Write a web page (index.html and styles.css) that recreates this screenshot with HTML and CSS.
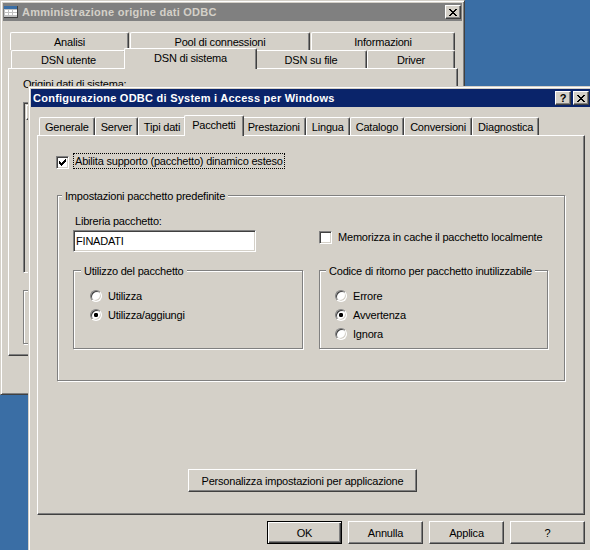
FILE: index.html
```html
<!DOCTYPE html>
<html lang="it">
<head>
<meta charset="utf-8">
<title>Configurazione ODBC di System i Access per Windows</title>
<link rel="stylesheet" href="styles.css">
</head>
<body>
<div class="win back">
  <div class="titlebar inactive">
    <svg class="appicon" width="16" height="16" viewBox="0 0 16 16" shape-rendering="crispEdges">
      <rect x="1" y="2" width="14" height="12" fill="#c0c0c0"/>
      <rect x="1" y="2" width="14" height="3" fill="#3a6ea5"/>
      <rect x="2" y="6" width="3" height="2" fill="#fff"/>
      <rect x="6" y="6" width="3" height="2" fill="#fff"/>
      <rect x="10" y="6" width="4" height="2" fill="#fff"/>
      <rect x="2" y="9" width="3" height="2" fill="#fff"/>
      <rect x="6" y="9" width="3" height="2" fill="#fff"/>
      <rect x="10" y="9" width="4" height="2" fill="#fff"/>
      <rect x="1" y="13" width="14" height="1" fill="#404040"/>
      <rect x="14" y="2" width="1" height="12" fill="#404040"/>
    </svg>
    <span class="title">Amministrazione origine dati ODBC</span>
    <span class="tbbtn">
      <svg width="8" height="7" viewBox="0 0 8 7" shape-rendering="crispEdges"><path fill="#000" d="M0 0h2v1h-2zM6 0h2v1h-2zM1 1h2v1h-2zM5 1h2v1h-2zM2 2h4v1h-4zM3 3h2v1h-2zM2 4h4v1h-4zM1 5h2v1h-2zM5 5h2v1h-2zM0 6h2v1h-2zM6 6h2v1h-2z"/></svg>
    </span>
  </div>
  <div class="client back-client">
    <div class="tabrows">
      <div class="tabrow row1">
        <div class="tab t-analisi">Analisi</div>
        <div class="tab t-pool">Pool di connessioni</div>
        <div class="tab t-info">Informazioni</div>
      </div>
      <div class="tabrow row2">
        <div class="tab t-utente">DSN utente</div>
        <div class="tab sel t-sistema">DSN di sistema</div>
        <div class="tab t-file">DSN su file</div>
        <div class="tab t-driver">Driver</div>
      </div>
    </div>
    <div class="panel back-panel">
      <div class="back-label">Origini dati di sistema:</div>
      <div class="listbox">
        <div class="lb-head"><span class="hdr"></span><span class="hdr"></span></div>
      </div>
      <div class="group back-group"></div>
    </div>
  </div>
</div>

<div class="win front">
  <div class="titlebar active">
    <span class="title">Configurazione ODBC di System i Access per Windows</span>
    <span class="tbbtn help">?</span>
    <span class="tbbtn">
      <svg width="8" height="7" viewBox="0 0 8 7" shape-rendering="crispEdges"><path fill="#000" d="M0 0h2v1h-2zM6 0h2v1h-2zM1 1h2v1h-2zM5 1h2v1h-2zM2 2h4v1h-4zM3 3h2v1h-2zM2 4h4v1h-4zM1 5h2v1h-2zM5 5h2v1h-2zM0 6h2v1h-2zM6 6h2v1h-2z"/></svg>
    </span>
  </div>
  <div class="client front-client">
    <div class="tabstrip">
      <div class="tab">Generale</div>
      <div class="tab">Server</div>
      <div class="tab">Tipi dati</div>
      <div class="tab sel">Pacchetti</div>
      <div class="tab">Prestazioni</div>
      <div class="tab">Lingua</div>
      <div class="tab">Catalogo</div>
      <div class="tab">Conversioni</div>
      <div class="tab">Diagnostica</div>
    </div>
    <div class="panel front-panel">
      <div class="chk-row first">
        <span class="cb">
          <svg width="7" height="7" viewBox="0 0 7 7" shape-rendering="crispEdges"><path fill="#000" d="M6 0h1v1h-1zM5 1h2v1h-2zM0 2h1v1h-1zM4 2h3v1h-3zM0 3h2v1h-2zM3 3h3v1h-3zM0 4h5v1h-5zM1 5h3v1h-3zM2 6h1v1h-1z"/></svg>
        </span>
        <span class="focus">Abilita supporto (pacchetto) dinamico esteso</span>
      </div>
      <div class="group g1">
        <div class="caption">Impostazioni pacchetto predefinite</div>
        <div class="g1-grid">
          <div class="lbl">Libreria pacchetto:</div>
          <div class="edit">FINADATI</div>
          <div class="chk-row cache"><span class="cb"></span><span class="chk-text">Memorizza in cache il pacchetto localmente</span></div>
          <div class="group g-use">
            <div class="caption">Utilizzo del pacchetto</div>
            <div class="radios">
              <div class="radio-row"><span class="radio"></span><span>Utilizza</span></div>
              <div class="radio-row"><span class="radio on"></span><span>Utilizza/aggiungi</span></div>
            </div>
          </div>
          <div class="group g-ret">
            <div class="caption">Codice di ritorno per pacchetto inutilizzabile</div>
            <div class="radios">
              <div class="radio-row"><span class="radio"></span><span>Errore</span></div>
              <div class="radio-row"><span class="radio on"></span><span>Avvertenza</span></div>
              <div class="radio-row"><span class="radio"></span><span>Ignora</span></div>
            </div>
          </div>
        </div>
      </div>
      <button class="btn wide">Personalizza impostazioni per applicazione</button>
    </div>
    <div class="dlg-buttons">
      <button class="btn default">OK</button>
      <button class="btn">Annulla</button>
      <button class="btn">Applica</button>
      <button class="btn">?</button>
    </div>
  </div>
</div>
</body>
</html>
```

FILE: styles.css
```css
* { box-sizing: border-box; }
html, body { margin: 0; padding: 0; }
body {
  width: 590px;
  height: 550px;
  overflow: hidden;
  position: relative;
  background: #3a6ea5;
  font-family: "Liberation Sans", Arial, sans-serif;
  font-size: 11px;
  letter-spacing: -0.2px;
  color: #000;
}

/* windows on the desktop */
.win {
  position: absolute;
  display: flex;
  flex-direction: column;
  background: #d4d0c8;
  border: 1px solid;
  border-color: #d4d0c8 #404040 #404040 #d4d0c8;
  box-shadow: inset 1px 1px #fff, inset -1px -1px #808080;
  padding: 2px;
}
.back { left: 0; top: 0; width: 465px; height: 395px; }
.front { left: 28px; top: 86px; width: 566px; height: 470px; }

/* title bars */
.titlebar {
  flex: none;
  height: 18px;
  display: flex;
  align-items: center;
  padding: 0 2px;
  font-weight: bold;
  letter-spacing: 0.25px;
  white-space: nowrap;
}
.titlebar.inactive { background: #808080; color: #d4d0c8; padding: 0 1px 0 0; }
.titlebar.active { background: #0a246a; color: #fff; }
.appicon { flex: none; margin-right: 3px; }
.title { flex: 1; }
.tbbtn {
  flex: none;
  width: 16px;
  height: 14px;
  display: flex;
  align-items: center;
  justify-content: center;
  background: #d4d0c8;
  border: 1px solid;
  border-color: #fff #404040 #404040 #fff;
  box-shadow: inset -1px -1px #808080;
}
.tbbtn + .tbbtn { margin-left: 2px; }
.help { color: #000; font-size: 11px; letter-spacing: 0; line-height: 12px; }

/* tabs */
.tab {
  flex: none;
  height: 18px;
  padding: 2px 5px 0;
  line-height: 15px;
  text-align: center;
  white-space: nowrap;
  background: #d4d0c8;
  border: 1px solid;
  border-bottom: 0;
  border-color: #fff #404040 #d4d0c8 #fff;
  border-radius: 2px 2px 0 0;
  box-shadow: inset -1px 0 #808080;
}
.tab.sel {
  height: 21px;
  margin: 0 -2px -1px;
  padding-left: 7px;
  padding-right: 7px;
  position: relative;
  z-index: 2;
}

/* tab panels */
.panel {
  border: 1px solid;
  border-color: #fff #404040 #404040 #fff;
  box-shadow: inset -1px -1px #808080;
}

/* back window */
.back-client { flex: 1; padding: 11px 4px 0 5px; }
.tabrows { display: flex; flex-direction: column; position: relative; z-index: 1; }
.tabrow { display: flex; align-items: flex-end; height: 18px; }
.row1 { padding-left: 2px; gap: 1px; }
.row2 { padding-left: 3px; }
.tabrow .tab { padding-left: 0; padding-right: 0; }
.t-analisi { width: 119px; }
.t-pool { width: 180px; }
.t-info { width: 144px; }
.t-utente { width: 115px; }
.t-sistema { width: 133px; }
.t-file { width: 112px; }
.t-driver { width: 88px; }
.back-panel { height: 288px; padding: 9px 0 0 14px; }
.back-label { line-height: 13px; white-space: nowrap; }
.listbox {
  margin-top: 11px;
  width: 420px;
  height: 171px;
  padding: 2px;
  border: 1px solid;
  border-color: #808080 #fff #fff #808080;
  box-shadow: inset 1px 1px #404040, inset -1px -1px #d4d0c8;
}
.lb-head { display: flex; height: 15px; }
.hdr {
  width: 100px;
  border: 1px solid;
  border-color: #fff #404040 #404040 #fff;
  box-shadow: inset -1px -1px #808080;
}
.back-group { margin-top: 17px; width: 420px; height: 54px; }

/* front window */
.front-client { flex: 1; padding: 8px 6px 0; }
.tabstrip {
  display: flex;
  align-items: flex-end;
  height: 20px;
  padding-left: 2px;
  position: relative;
  z-index: 1;
}
.front-panel { height: 380px; padding: 17px 0 0 18px; }

.chk-row { display: flex; }
.chk-row.first { height: 16px; align-items: flex-end; }
.cb {
  flex: none;
  width: 13px;
  height: 13px;
  display: flex;
  align-items: center;
  justify-content: center;
  background: #fff;
  border: 1px solid;
  border-color: #808080 #fff #fff #808080;
  box-shadow: inset 1px 1px #404040, inset -1px -1px #d4d0c8;
}
.focus {
  margin-left: 4px;
  height: 16px;
  padding: 0 1px;
  border: 1px dotted #000;
  line-height: 14px;
  white-space: nowrap;
}

/* group boxes */
.group {
  border: 1px solid #808080;
  box-shadow: inset 1px 1px #fff, 1px 1px #fff;
}
.caption {
  width: max-content;
  margin-top: -6px;
  padding: 0 3px;
  background: #d4d0c8;
  line-height: 13px;
  white-space: nowrap;
}
.g1 { width: 508px; height: 186px; margin: 26px 0 0 1px; }
.g1 > .caption { margin-left: 4px; }
.g1-grid {
  display: grid;
  grid-template-columns: 231px 230px;
  column-gap: 15px;
  align-items: start;
  margin: 12px 15px 0;
}
.lbl { grid-column: 1; grid-row: 1; margin-left: 2px; line-height: 13px; }
.edit {
  grid-column: 1;
  grid-row: 2;
  margin-top: 2px;
  width: 183px;
  height: 22px;
  padding: 0 2px;
  line-height: 20px;
  white-space: nowrap;
  background: #fff;
  border: 1px solid;
  border-color: #808080 #fff #fff #808080;
  box-shadow: inset 1px 1px #404040, inset -1px -1px #d4d0c8;
}
.cache { grid-column: 2; grid-row: 2; margin-top: 3px; height: 13px; align-items: center; }
.chk-text { margin-left: 6px; line-height: 13px; white-space: nowrap; }
.g-use { grid-column: 1; grid-row: 3; width: 230px; height: 79px; margin-top: 18px; }
.g-ret { grid-column: 2; grid-row: 3; width: 229px; height: 79px; margin-top: 18px; }
.g-use .caption { margin-left: 7px; }
.g-ret .caption { margin-left: 6px; }
.radios { margin-top: 8px; }
.g-use .radios { padding-left: 16px; }
.g-ret .radios { padding-left: 15px; }
.radio-row { display: flex; align-items: center; gap: 6px; height: 19px; white-space: nowrap; }
.radio {
  flex: none;
  width: 12px;
  height: 12px;
  border-radius: 50%;
  background: #fff;
  border: 1px solid;
  border-color: #808080 #fff #fff #808080;
  box-shadow: inset 1px 1px #404040, inset -1px -1px #d4d0c8;
}
.radio.on { background: radial-gradient(circle at 50% 50%, #000 0 2px, #fff 2.3px); }

/* push buttons */
.btn {
  display: flex;
  align-items: center;
  justify-content: center;
  height: 23px;
  padding: 0;
  margin: 0;
  font: inherit;
  letter-spacing: inherit;
  color: #000;
  background: #d4d0c8;
  border: 1px solid;
  border-color: #fff #404040 #404040 #fff;
  border-radius: 0;
  box-shadow: inset -1px -1px #808080;
  white-space: nowrap;
}
.btn.default {
  border-color: #000;
  box-shadow: inset 1px 1px #fff, inset -1px -1px #404040, inset -2px -2px #808080;
}
.wide { width: 229px; margin: 88px 0 0 132px; }
.dlg-buttons { display: flex; justify-content: flex-end; gap: 6px; margin-top: 6px; }
.dlg-buttons .btn { width: 75px; }
```
